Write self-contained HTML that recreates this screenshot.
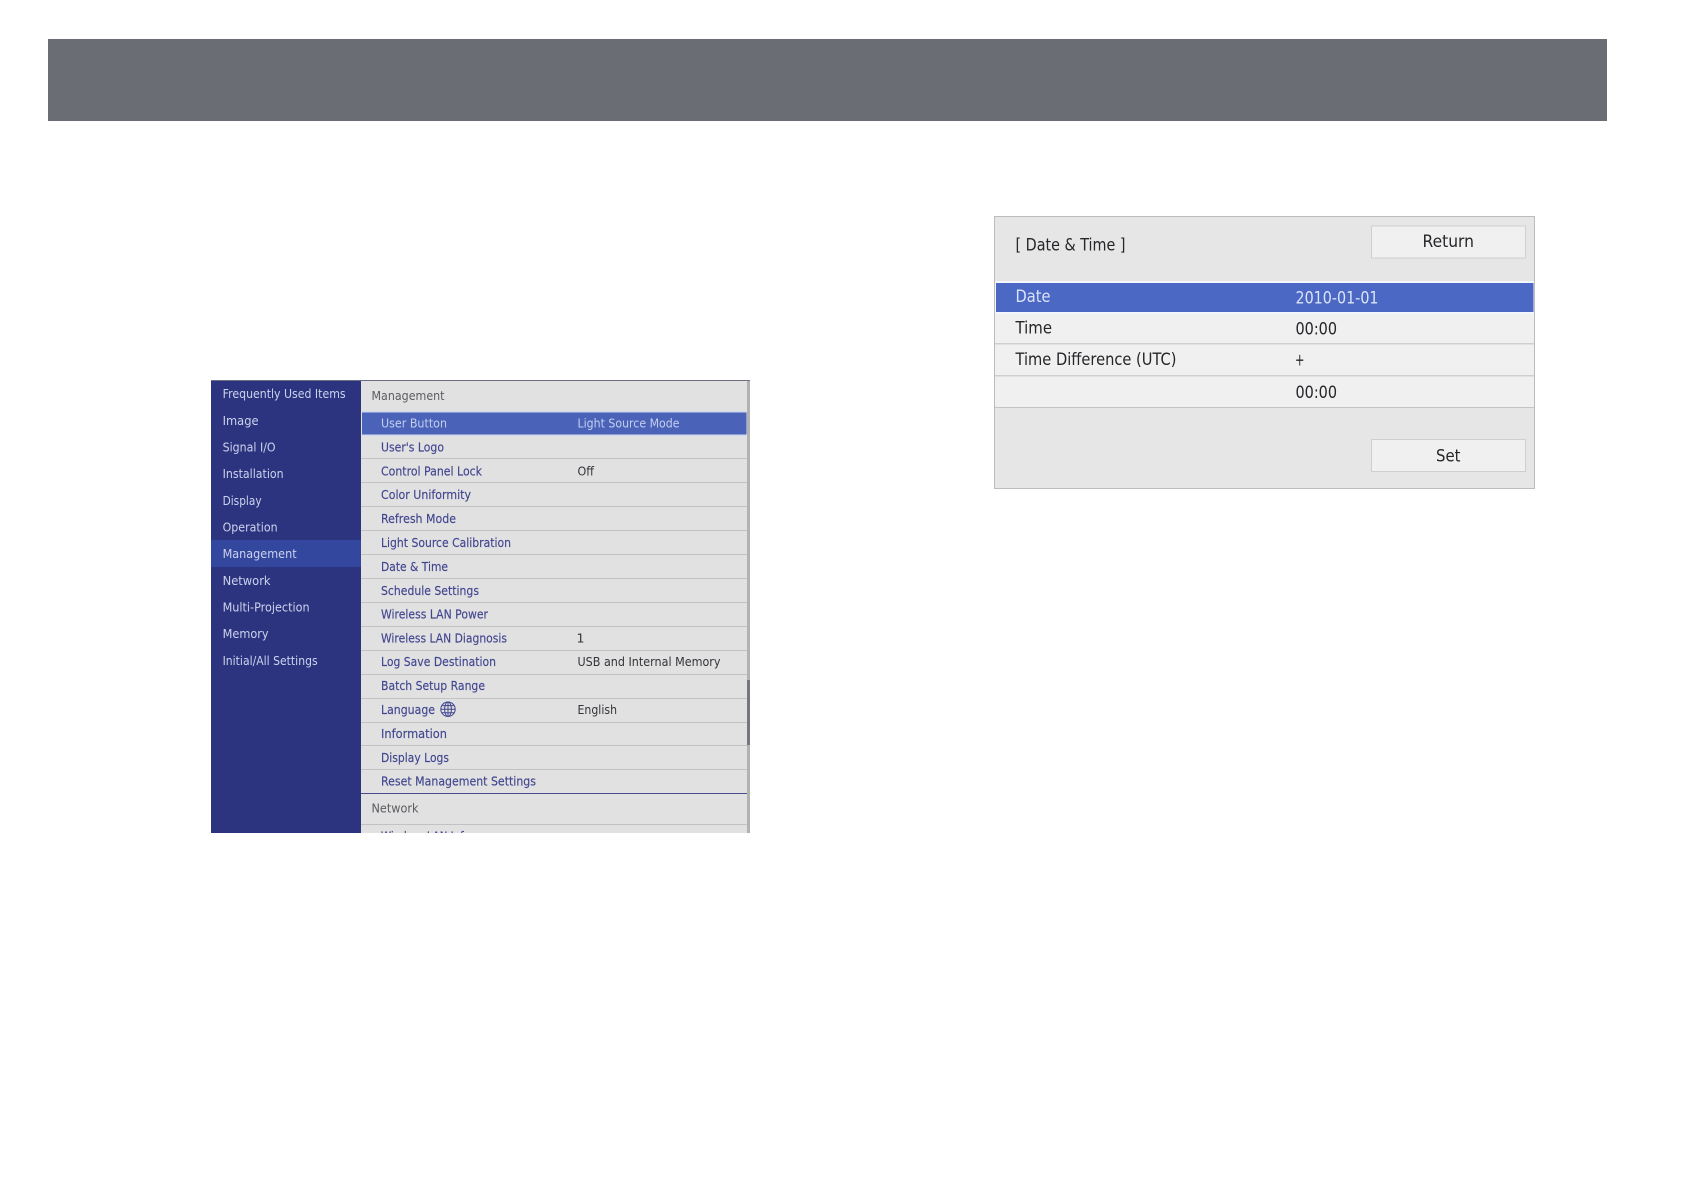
<!DOCTYPE html>
<html lang="en">
<head>
<meta charset="utf-8">
<title>Date &amp; Time</title>
<style>
html,body{margin:0;padding:0;background:#fff}
svg{display:block;position:absolute;left:0;top:0}
text{font-family:"DejaVu Sans","Liberation Sans",sans-serif}
.s{font-size:12.5px;fill:#ccd2ec}
.h{font-size:12.5px;fill:#5b5b62}
.m{font-size:12.5px;fill:#41468f;stroke:#41468f;stroke-width:.15px}
.v{font-size:12.5px;fill:#34343a}
.d{font-size:16.5px;fill:#26262a}
.w{font-size:16.5px;fill:#dce4f8}
</style>
</head>
<body>
<svg width="1684" height="1190" viewBox="0 0 1684 1190" xmlns="http://www.w3.org/2000/svg">
<defs><clipPath id="c"><rect x="211" y="380" width="539" height="453"/></clipPath></defs>
<rect x="48" y="39" width="1559" height="82" fill="#6a6d73"/>

<g clip-path="url(#c)" style="filter:blur(.3px)">
<rect x="211" y="380" width="150" height="453" fill="#2c3480"/>
<rect x="211" y="540" width="150" height="27" fill="#34479f"/>
<rect x="361" y="380" width="386" height="453" fill="#e1e1e1"/>
<rect x="747" y="380" width="3" height="453" fill="#b2b2b2"/>
<rect x="747" y="680" width="3" height="65" fill="#76767e"/>
<rect x="211" y="379" width="539" height="2" fill="#6d6e85"/>
<rect x="362" y="411" width="385" height="25" fill="#d2daf0"/>
<rect x="362" y="412.5" width="384.5" height="22" fill="#4a62b8"/>
<g fill="#c2c2c2">
<rect x="361" y="458" width="386" height="1"/><rect x="361" y="482" width="386" height="1"/>
<rect x="361" y="506" width="386" height="1"/><rect x="361" y="530" width="386" height="1"/>
<rect x="361" y="554" width="386" height="1"/><rect x="361" y="578" width="386" height="1"/>
<rect x="361" y="602" width="386" height="1"/><rect x="361" y="626" width="386" height="1"/>
<rect x="361" y="650" width="386" height="1"/><rect x="361" y="674" width="386" height="1"/>
<rect x="361" y="698" width="386" height="1"/><rect x="361" y="722" width="386" height="1"/>
<rect x="361" y="745" width="386" height="1"/><rect x="361" y="769" width="386" height="1"/>
<rect x="361" y="824" width="386" height="1"/>
</g>
<rect x="361" y="793" width="386" height="1" fill="#4a4c90"/>

<g transform="translate(-.4,-.2)">
<text class="s" x="223" y="398" textLength="123" lengthAdjust="spacingAndGlyphs">Frequently Used Items</text>
<text class="s" x="223" y="425" textLength="36" lengthAdjust="spacingAndGlyphs">Image</text>
<text class="s" x="223" y="451.5" textLength="53" lengthAdjust="spacingAndGlyphs">Signal I/O</text>
<text class="s" x="223" y="478" textLength="61" lengthAdjust="spacingAndGlyphs">Installation</text>
<text class="s" x="223" y="505" textLength="39" lengthAdjust="spacingAndGlyphs">Display</text>
<text class="s" x="223" y="531.5" textLength="55" lengthAdjust="spacingAndGlyphs">Operation</text>
<text class="s" x="223" y="558" textLength="74" lengthAdjust="spacingAndGlyphs">Management</text>
<text class="s" x="223" y="585" textLength="48" lengthAdjust="spacingAndGlyphs">Network</text>
<text class="s" x="223" y="611.5" textLength="87" lengthAdjust="spacingAndGlyphs">Multi-Projection</text>
<text class="s" x="223" y="638" textLength="46" lengthAdjust="spacingAndGlyphs">Memory</text>
<text class="s" x="223" y="665" textLength="95" lengthAdjust="spacingAndGlyphs">Initial/All Settings</text>
</g>

<g transform="translate(-.5,-.8)">
<text class="h" x="372" y="401" textLength="73" lengthAdjust="spacingAndGlyphs">Management</text>
<text class="m" x="381.5" y="428.5" textLength="66" lengthAdjust="spacingAndGlyphs" style="fill:#c3cff0;stroke:none">User Button</text>
<text class="m" x="381.5" y="452.5" textLength="63" lengthAdjust="spacingAndGlyphs">User's Logo</text>
<text class="m" x="381.5" y="476.5" textLength="101" lengthAdjust="spacingAndGlyphs">Control Panel Lock</text>
<text class="m" x="381.5" y="500" textLength="90" lengthAdjust="spacingAndGlyphs">Color Uniformity</text>
<text class="m" x="381.5" y="524" textLength="75" lengthAdjust="spacingAndGlyphs">Refresh Mode</text>
<text class="m" x="381.5" y="548" textLength="130" lengthAdjust="spacingAndGlyphs">Light Source Calibration</text>
<text class="m" x="381.5" y="572" textLength="67" lengthAdjust="spacingAndGlyphs">Date &amp; Time</text>
<text class="m" x="381.5" y="596" textLength="98" lengthAdjust="spacingAndGlyphs">Schedule Settings</text>
<text class="m" x="381.5" y="619.5" textLength="107" lengthAdjust="spacingAndGlyphs">Wireless LAN Power</text>
<text class="m" x="381.5" y="643.5" textLength="126" lengthAdjust="spacingAndGlyphs">Wireless LAN Diagnosis</text>
<text class="m" x="381.5" y="667" textLength="115" lengthAdjust="spacingAndGlyphs">Log Save Destination</text>
<text class="m" x="381.5" y="691" textLength="104" lengthAdjust="spacingAndGlyphs">Batch Setup Range</text>
<text class="m" x="381.5" y="715" textLength="54" lengthAdjust="spacingAndGlyphs">Language</text>
<text class="m" x="381.5" y="739" textLength="66" lengthAdjust="spacingAndGlyphs">Information</text>
<text class="m" x="381.5" y="763" textLength="68" lengthAdjust="spacingAndGlyphs">Display Logs</text>
<text class="m" x="381.5" y="786.5" textLength="155" lengthAdjust="spacingAndGlyphs">Reset Management Settings</text>
<text class="h" x="372" y="813.5" textLength="47" lengthAdjust="spacingAndGlyphs">Network</text>
<text class="m" x="381.5" y="841.5" textLength="92" lengthAdjust="spacingAndGlyphs">Wireless LAN Info.</text>

<text class="v" x="578" y="428.5" textLength="102" lengthAdjust="spacingAndGlyphs" style="fill:#c3cff0">Light Source Mode</text>
<text class="v" x="578" y="476.5" textLength="16.5" lengthAdjust="spacingAndGlyphs">Off</text>
<text class="v" x="577" y="643.5">1</text>
<text class="v" x="578" y="667" textLength="143" lengthAdjust="spacingAndGlyphs">USB and Internal Memory</text>
<text class="v" x="578" y="715" textLength="39.5" lengthAdjust="spacingAndGlyphs">English</text>
</g>

<g fill="none" stroke="#41468f" stroke-width="1" transform="translate(0,-.8)">
<circle cx="448" cy="710" r="7.2"/>
<ellipse cx="448" cy="710" rx="3.4" ry="7.2"/>
<path d="M448 702.8V717.2M440.8 710H455.2M441.8 706.4H454.2M441.8 713.6H454.2"/>
</g>
</g>

<g style="filter:blur(.25px)">
<rect x="994.5" y="216.5" width="540" height="272" fill="#e6e6e6" stroke="#bcbcbc"/>
<rect x="995" y="282" width="539" height="126" fill="#f0f0f0"/>
<rect x="995" y="281" width="539" height="33" fill="#f3f6fc"/>
<rect x="996" y="283" width="537.5" height="29" fill="#4a68c4"/>
<rect x="995" y="343" width="539" height="1.5" fill="#cfcfcf"/>
<rect x="995" y="375" width="539" height="1.5" fill="#cfcfcf"/>
<rect x="995" y="407" width="539" height="1" fill="#c4c4c4"/>
<rect x="1371.5" y="226" width="154" height="32" fill="#f0f0f0" stroke="#cfcfcf"/>
<rect x="1371.5" y="439.5" width="154" height="32" fill="#f0f0f0" stroke="#cfcfcf"/>

<g transform="translate(-.5,-.6)">
<text class="d" x="1016" y="251" textLength="110" lengthAdjust="spacingAndGlyphs">[ Date &amp; Time ]</text>
<text class="d" x="1423" y="247.5" textLength="51.5" lengthAdjust="spacingAndGlyphs">Return</text>
<text class="w" x="1016" y="302.5" textLength="35" lengthAdjust="spacingAndGlyphs">Date</text>
<text class="w" x="1296" y="304" textLength="83" lengthAdjust="spacingAndGlyphs">2010-01-01</text>
<text class="d" x="1016" y="334.3" textLength="36.5" lengthAdjust="spacingAndGlyphs">Time</text>
<text class="d" x="1296" y="335" textLength="41.5" lengthAdjust="spacingAndGlyphs">00:00</text>
<text class="d" x="1016" y="365.8" textLength="161" lengthAdjust="spacingAndGlyphs">Time Difference (UTC)</text>
<text class="d" x="1295.5" y="366" textLength="9.5" lengthAdjust="spacingAndGlyphs">+</text>
<text class="d" x="1296" y="398.5" textLength="41.5" lengthAdjust="spacingAndGlyphs">00:00</text>
<text class="d" x="1436.5" y="462" textLength="24.5" lengthAdjust="spacingAndGlyphs">Set</text>
</g>
</g>
</svg>
</body>
</html>
